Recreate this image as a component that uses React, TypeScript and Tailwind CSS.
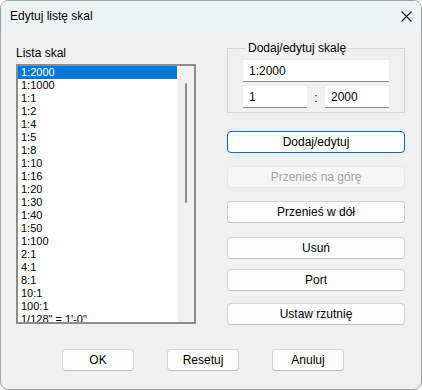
import React from "react"

const scales = [
    "1:2000", "1:1000", "1:1", "1:2", "1:4", "1:5", "1:8", "1:10", "1:16", "1:20",
    "1:30", "1:40", "1:50", "1:100", "2:1", "4:1", "8:1", "10:1", "100:1", "1/128\" = 1'-0\"",
]

const font = { fontFamily: '"Liberation Sans", Arial, sans-serif' }

type BtnProps = {
    label: string
    className?: string
    primary?: boolean
    disabled?: boolean
}

const Btn: React.FC<BtnProps> = ({ label, className = "", primary, disabled }) => (
    <div
        className={[
            "flex h-[22px] items-center justify-center rounded-[4px] border text-[12px] leading-[15px]",
            primary
                ? "border-[#0a64c0] bg-[#fdfdfd] text-black"
                : disabled
                ? "border-[#e6e6e6] bg-[#f6f6f6] text-[#a3a3a3]"
                : "border-[#d3d3d3] border-b-[#bdbdbd] bg-[#fdfdfd] text-black",
            className,
        ].join(" ")}
    >
        {label}
    </div>
)

const Field: React.FC<{ value: string; className?: string }> = ({ value, className = "" }) => (
    <div
        className={
            "flex h-[23px] items-center rounded-[2px] border border-[#ececec] border-b-[#8a8a8a] bg-white pl-[6px] text-[12px] text-black " +
            className
        }
    >
        {value}
    </div>
)

export default function App() {
    return (
        <div className="h-[390px] w-[422px] bg-white" style={font}>
            <div className="flex h-[390px] w-[422px] flex-col overflow-hidden rounded-[8px] border border-[#a3a3a3] bg-[#f0f0f0]">
                {/* Title bar */}
                <div className="flex h-[30px] shrink-0 items-center justify-between bg-[#eef4f6] pl-[9px] pr-[9px]">
                    <span className="text-[12px] leading-[15px] text-black">Edytuj listę skal</span>
                    <svg width="11" height="11" viewBox="0 0 11 11" className="text-[#1a1a1a]">
                        <path d="M0.5 0.5 L10.5 10.5 M10.5 0.5 L0.5 10.5" stroke="currentColor" strokeWidth="1.1" />
                    </svg>
                </div>

                {/* Body */}
                <div className="flex">
                    {/* Left: list */}
                    <div className="ml-[15px] flex w-[180px] flex-col pt-[15px]">
                        <span className="text-[12px] leading-[15px] text-black">Lista skal</span>
                        <div className="mt-[3px] flex h-[260px] overflow-hidden border-2 border-[#8c8c8c] bg-white">
                            <div className="flex w-[160px] flex-col">
                                {scales.map((s, i) => (
                                    <div
                                        key={s}
                                        className={
                                            "h-[13px] shrink-0 whitespace-nowrap pl-[3px] text-[11px] leading-[13px] " +
                                            (i === 0 ? "w-[159px] bg-[#0078d7] text-white" : "text-black")
                                        }
                                    >
                                        {s}
                                    </div>
                                ))}
                            </div>
                            <div className="flex w-[16px] flex-col bg-[#f0f0f0] pt-[17px]">
                                <div className="mx-auto h-[120px] w-[2px] rounded-full bg-[#8a8a8a]" />
                            </div>
                        </div>
                    </div>

                    {/* Right: edit group + buttons */}
                    <div className="ml-[31px] flex w-[178px] flex-col pt-[10px]">
                        <fieldset className="border border-[#d6d6d6] px-[14px] pb-[4px]">
                            <legend className="ml-[4px] px-[2px] text-[12px] leading-[15px] text-black">
                                Dodaj/edytuj skalę
                            </legend>
                            <div className="mt-[3px] flex flex-col gap-[3px]">
                                <Field value="1:2000" />
                                <div className="flex items-center justify-between">
                                    <Field value="1" className="w-[66px]" />
                                    <span className="pt-[3px] text-[12px] text-black">:</span>
                                    <Field value="2000" className="w-[66px]" />
                                </div>
                            </div>
                        </fieldset>
                        <Btn label="Dodaj/edytuj" primary className="mt-[18px]" />
                        <Btn label="Przenieś na górę" disabled className="mt-[13px]" />
                        <Btn label="Przenieś w dół" className="mt-[13px]" />
                        <Btn label="Usuń" className="mt-[14px]" />
                        <Btn label="Port" className="mt-[10px]" />
                        <Btn label="Ustaw rzutnię" className="mt-[12px]" />
                    </div>
                </div>

                {/* Footer */}
                <div className="mt-[24px] flex gap-[33px] pl-[61px]">
                    <Btn label="OK" className="w-[72px]" />
                    <Btn label="Resetuj" className="w-[72px]" />
                    <Btn label="Anuluj" className="w-[72px]" />
                </div>
            </div>
        </div>
    )
}
